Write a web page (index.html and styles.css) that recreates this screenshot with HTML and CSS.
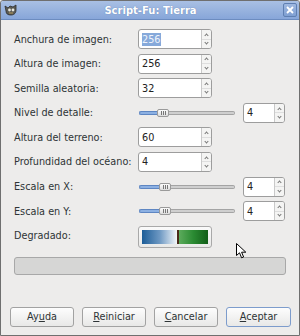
FILE: index.html
```html
<!DOCTYPE html>
<html lang="es">
<head>
    <meta charset="UTF-8">
    <title>Script-Fu: Tierra</title>
    <link rel="stylesheet" href="styles.css">
</head>
<body>
    <div class="window">
        <div class="titlebar">
            <svg class="app-icon" width="14" height="12" viewBox="0 0 14 12">
                <path d="M1 2 L4 4 L6 2 L9 3 L12 1 L12 6 C12 10 9 11 7 11 C4 11 2 10 2 7 Z" fill="#5b5b55" stroke="#2f2f2c" stroke-width="0.8"/>
                <circle cx="5.5" cy="6" r="1.4" fill="#e8e8e0"/>
                <circle cx="9" cy="6" r="1.4" fill="#e8e8e0"/>
                <path d="M5 9 L9 9" stroke="#b59a5a" stroke-width="1.2"/>
            </svg>
            <div class="title">Script-Fu: Tierra</div>
            <div class="close-btn">
                <svg width="8" height="8" viewBox="0 0 8 8">
                    <path d="M1 1 L7 7 M7 1 L1 7" stroke="#fff" stroke-width="1.8"/>
                </svg>
            </div>
        </div>

        <div class="content">
            <div class="form">
                <label>Anchura de imagen:</label>
                <div class="spin wide"><span class="spin-value"><span class="selected">256</span></span><span class="spin-btns"><i class="up"></i><i class="down"></i></span></div>

                <label>Altura de imagen:</label>
                <div class="spin wide"><span class="spin-value">256</span><span class="spin-btns"><i class="up"></i><i class="down"></i></span></div>

                <label>Semilla aleatoria:</label>
                <div class="spin wide"><span class="spin-value">32</span><span class="spin-btns"><i class="up"></i><i class="down"></i></span></div>

                <label>Nivel de detalle:</label>
                <div class="scale-row">
                    <div class="slider"><div class="fill" style="width: 18px"></div><div class="knob"><b></b><b></b><b></b></div><div class="rest"></div></div>
                    <div class="spin small"><span class="spin-value">4</span><span class="spin-btns"><i class="up"></i><i class="down"></i></span></div>
                </div>

                <label>Altura del terreno:</label>
                <div class="spin wide"><span class="spin-value">60</span><span class="spin-btns"><i class="up"></i><i class="down"></i></span></div>

                <label>Profundidad del océano:</label>
                <div class="spin wide"><span class="spin-value">4</span><span class="spin-btns"><i class="up"></i><i class="down"></i></span></div>

                <label>Escala en X:</label>
                <div class="scale-row">
                    <div class="slider"><div class="fill" style="width: 20px"></div><div class="knob"><b></b><b></b><b></b></div><div class="rest"></div></div>
                    <div class="spin small"><span class="spin-value">4</span><span class="spin-btns"><i class="up"></i><i class="down"></i></span></div>
                </div>

                <label>Escala en Y:</label>
                <div class="scale-row">
                    <div class="slider"><div class="fill" style="width: 20px"></div><div class="knob"><b></b><b></b><b></b></div><div class="rest"></div></div>
                    <div class="spin small"><span class="spin-value">4</span><span class="spin-btns"><i class="up"></i><i class="down"></i></span></div>
                </div>

                <label>Degradado:</label>
                <div class="gradient-btn"><div class="gradient"><span class="blue"></span><span class="split"></span><span class="green"></span></div></div>
            </div>

            <div class="progress"></div>
        </div>

        <div class="buttons">
            <button>Ay<u>u</u>da</button>
            <button><u>R</u>einiciar</button>
            <button><u>C</u>ancelar</button>
            <button class="default"><u>A</u>ceptar</button>
        </div>

        <svg class="cursor" width="11" height="16" viewBox="0 0 11 16">
            <path d="M0.5 0.5 L0.5 12.5 L3.5 9.8 L5.6 14.8 L7.6 14 L5.6 9.2 L9.8 9.2 Z" fill="#fff" stroke="#000" stroke-width="1"/>
        </svg>
    </div>
</body>
</html>
```

FILE: styles.css
```css
body {
    margin: 0;
    font-family: 'DejaVu Sans', sans-serif;
    font-size: 9.7px;
    color: #2e3436;
    background: #edeceb;
}
.window {
    position: relative;
    width: 298px;
    height: 334px;
    border: 1px solid #6f6f6f;
    border-radius: 3px 3px 0 0;
    background: #edeceb;
    overflow: hidden;
}
.titlebar {
    height: 18px;
    display: flex;
    align-items: center;
    padding: 0 2px 0 3px;
    background: linear-gradient(#a9c0e4, #87a6d9);
    border-bottom: 1px solid #6c8cc0;
}
.app-icon {
    flex: none;
}
.title {
    flex: 1;
    text-align: center;
    color: #fff;
    font-weight: bold;
    font-size: 10px;
    text-shadow: 0 0 1px #5a78a8;
}
.close-btn {
    width: 12px;
    height: 12px;
    border: 1px solid #5f7fb2;
    border-radius: 2px;
    background: linear-gradient(#9fb8e0, #7f9fd2);
    display: flex;
    align-items: center;
    justify-content: center;
}
.content {
    padding: 9px 13px 0 13px;
}
.form {
    display: grid;
    grid-template-columns: 124px 1fr;
    grid-auto-rows: 20px;
    row-gap: 4.6px;
    align-items: center;
}
.spin {
    display: flex;
    height: 20px;
    box-sizing: border-box;
    border: 1px solid #9d9d9d;
    border-radius: 3px;
    background: #fff;
    overflow: hidden;
}
.spin.wide {
    width: 74px;
}
.spin.small {
    width: 42px;
}
.spin-value {
    flex: 1;
    display: flex;
    align-items: center;
    padding-left: 3px;
    color: #222;
}
.selected {
    background: #86a9da;
    color: #eef3fb;
    padding: 1px 0;
}
.spin-btns {
    width: 9px;
    display: flex;
    flex-direction: column;
    border-left: 1px solid #c9c9c9;
    background: #f4f4f3;
}
.spin-btns i {
    flex: 1;
    display: flex;
    align-items: center;
    justify-content: center;
}
.spin-btns i + i {
    border-top: 1px solid #dedede;
}
.spin-btns i::before {
    content: "";
    width: 2px;
    height: 2px;
    border-left: 1px solid #777;
    border-top: 1px solid #777;
}
.spin-btns .up::before {
    transform: translateY(1px) rotate(45deg);
}
.spin-btns .down::before {
    transform: translateY(-1px) rotate(225deg);
}
.scale-row {
    display: flex;
    align-items: center;
    gap: 8px;
    padding-left: 1px;
}
.slider {
    width: 96px;
    display: flex;
    align-items: center;
}
.fill {
    height: 4px;
    box-sizing: border-box;
    border: 1px solid #5e86c2;
    border-right: none;
    border-radius: 2px 0 0 2px;
    background: #8cb0e2;
}
.rest {
    flex: 1;
    height: 4px;
    box-sizing: border-box;
    border: 1px solid #a4a4a4;
    border-left: none;
    border-radius: 0 2px 2px 0;
    background: #cfcfcf;
}
.knob {
    width: 12px;
    height: 8px;
    box-sizing: border-box;
    border: 1px solid #9a9a9a;
    border-radius: 2px;
    background: linear-gradient(#fbfbfb, #dcdcdc);
    display: flex;
    align-items: center;
    justify-content: center;
    gap: 1px;
}
.knob b {
    width: 1px;
    height: 4px;
    background: #777;
}
.gradient-btn {
    width: 74px;
    height: 22px;
    box-sizing: border-box;
    margin-top: 2px;
    border: 1px solid #a9a9a9;
    border-radius: 3px;
    background: linear-gradient(#fafafa, #e9e9e8);
    padding: 3px;
}
.gradient {
    height: 100%;
    display: flex;
}
.blue {
    width: 35px;
    background: linear-gradient(to right, #1c5d98, #6c97c2, #f4f7fa);
}
.split {
    width: 2px;
    background: #4a2a1a;
}
.green {
    flex: 1;
    background: linear-gradient(to right, #5cab5c, #2a8a32, #125e18);
}
.progress {
    margin-top: 11px;
    height: 18px;
    box-sizing: border-box;
    border: 1px solid #a8a8a8;
    border-radius: 3px;
    background: #d6d6d5;
}
.buttons {
    display: flex;
    gap: 8px;
    padding: 32px 0 0 9px;
}
button {
    width: 64px;
    height: 20px;
    padding: 0;
    font-family: 'DejaVu Sans', sans-serif;
    font-size: 9.7px;
    color: #2e3436;
    border: 1px solid #a2a2a2;
    border-radius: 3px;
    background: linear-gradient(#fdfdfd, #e8e8e7);
}
button.default {
    width: 65px;
    border-color: #7d9ccc;
}
.cursor {
    position: absolute;
    left: 235px;
    top: 242px;
}
```
